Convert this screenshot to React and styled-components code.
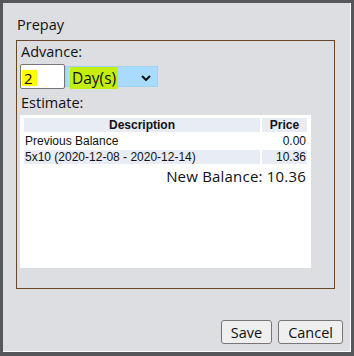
import React from "react";
import styled, { createGlobalStyle } from "styled-components";

const GlobalStyle = createGlobalStyle`
  html, body {
    margin: 0;
    padding: 0;
    background: #55575b;
  }
  body {
    font-family: "Open Sans", "Liberation Sans", sans-serif;
    color: #111;
  }
`;

const rows = [
  { desc: "Previous Balance", price: "0.00" },
  { desc: "5x10 (2020-12-08 - 2020-12-14)", price: "10.36", shaded: true },
];

const App = () => {
  return (
    <>
      <GlobalStyle />
      <Dialog>
        <Title>Prepay</Title>
        <Panel>
          <Label>Advance:</Label>
          <Controls>
            <NumberBox>
              <Mark>2</Mark>
            </NumberBox>
            <Select>
              <SelectText>Day(s)</SelectText>
              <svg width='10' height='6' viewBox='0 0 10 6'>
                <polyline
                  points='1,1 5,5 9,1'
                  fill='none'
                  stroke='#111'
                  strokeWidth='2'
                />
              </svg>
            </Select>
          </Controls>
          <Label $gap>Estimate:</Label>
          <Estimate>
            <Table>
              <thead>
                <tr>
                  <Th>Description</Th>
                  <Th $price>Price</Th>
                </tr>
              </thead>
              <tbody>
                {rows.map((r) => (
                  <tr key={r.desc}>
                    <Td $shaded={r.shaded}>{r.desc}</Td>
                    <Td $shaded={r.shaded} $right>
                      {r.price}
                    </Td>
                  </tr>
                ))}
              </tbody>
            </Table>
            <Total>New Balance: 10.36</Total>
          </Estimate>
        </Panel>
        <Buttons>
          <Button>Save</Button>
          <Button>Cancel</Button>
        </Buttons>
      </Dialog>
    </>
  );
};

const Dialog = styled.div`
  box-sizing: border-box;
  margin: 3px 0 0 3px;
  width: 348px;
  height: 349px;
  background: #dcdee2;
  border-right: 1px solid #fff;
  border-bottom: 1px solid #fff;
  padding: 12px 7px 7px 13px;
  display: flex;
  flex-direction: column;
`;

const Title = styled.div`
  font-size: 14.5px;
  line-height: 20px;
  padding-left: 1px;
  margin-bottom: 5px;
`;

const Panel = styled.div`
  box-sizing: border-box;
  width: 319px;
  height: 249px;
  border: 1px solid #6b4625;
  padding: 2px 3px 0 3px;
`;

const Label = styled.div`
  font-size: 14.5px;
  line-height: 18px;
  padding-left: 1px;
  margin-top: ${(p) => (p.$gap ? "5px" : "0")};
`;

const Controls = styled.div`
  display: flex;
  align-items: flex-start;
  margin-top: 3px;
`;

const NumberBox = styled.div`
  box-sizing: border-box;
  width: 45px;
  height: 25px;
  background: #fff;
  border: 1px solid #767676;
  border-radius: 2px;
  padding: 2px 0 0 1px;
`;

const Mark = styled.span`
  display: inline-block;
  background: #ffff00;
  font-size: 15px;
  line-height: 16px;
  padding: 0 4px 0 2px;
`;

const Select = styled.div`
  box-sizing: border-box;
  width: 93px;
  height: 21px;
  margin-top: 2px;
  background: #a8dbfd;
  border: 1px solid #9fd3f5;
  display: flex;
  align-items: flex-start;
  justify-content: space-between;
  padding: 0 6px 0 4px;
  svg {
    margin-top: 8px;
  }
`;

const SelectText = styled.span`
  background: #c2ee10;
  font-size: 15.5px;
  line-height: 22px;
  padding: 0 2px;
`;

const Estimate = styled.div`
  box-sizing: border-box;
  width: 291px;
  height: 153px;
  margin-top: 3px;
  background: #fff;
  padding: 1px 2px 0 2px;
`;

const Table = styled.table`
  width: 100%;
  border-spacing: 2px;
  font-family: "Liberation Sans", Arial, sans-serif;
  font-size: 12px;
`;

const Th = styled.th`
  background: #e8ecf4;
  font-weight: bold;
  line-height: 14px;
  padding: 0;
  width: ${(p) => (p.$price ? "45px" : "auto")};
`;

const Td = styled.td`
  background: ${(p) => (p.$shaded ? "#e8ecf4" : "transparent")};
  line-height: 14px;
  padding: 0 1px;
  text-align: ${(p) => (p.$right ? "right" : "left")};
  white-space: nowrap;
`;

const Total = styled.div`
  font-size: 15px;
  line-height: 20px;
  letter-spacing: 0.2px;
  text-align: right;
  padding-right: 3px;
`;

const Buttons = styled.div`
  margin-top: auto;
  display: flex;
  justify-content: flex-end;
  gap: 6px;
`;

const Button = styled.button`
  box-sizing: border-box;
  height: 24px;
  padding: 0 9px;
  background: #efefef;
  border: 1px solid #767676;
  border-radius: 3px;
  font-family: "Open Sans", "Liberation Sans", sans-serif;
  font-size: 14.5px;
  color: #111;
`;

export default App;
